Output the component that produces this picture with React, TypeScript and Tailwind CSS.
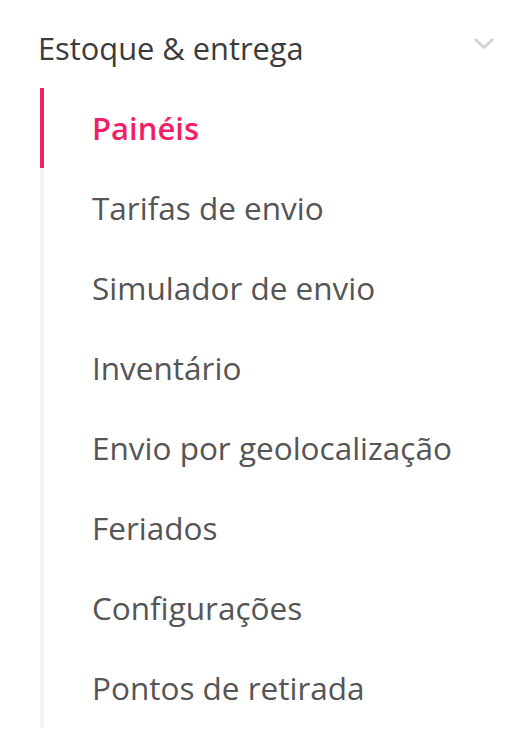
const items = [
  "Painéis",
  "Tarifas de envio",
  "Simulador de envio",
  "Inventário",
  "Envio por geolocalização",
  "Feriados",
  "Configurações",
  "Pontos de retirada",
];

export default function App() {
  return (
    <div className="min-h-[744px] bg-white pt-[28px] font-['Open_Sans',sans-serif]">
      <div className="flex items-center justify-between pl-[38px] pr-[20px]">
        <span className="text-[30.8px] leading-[40px] text-[#3b3b3b]">Estoque &amp; entrega</span>
        <svg width="20" height="11" viewBox="0 0 20 11" className="mb-[10px]" fill="none">
          <polyline points="1.5,1.5 10,9.5 18.5,1.5" stroke="#d2d2d2" strokeWidth="2.5" strokeLinecap="round" strokeLinejoin="round" />
        </svg>
      </div>
      <ul className="ml-[40px] mt-[20px] border-l-4 border-[#f1f2f4]">
        {items.map((item, i) => (
          <li
            key={item}
            className={
              i === 0
                ? "-ml-[4px] flex h-[80px] items-center border-l-4 border-[#f21f68] pl-[48px] text-[31px] leading-[40px] font-semibold text-[#f21f68]"
                : "flex h-[80px] items-center pl-[48px] text-[31.5px] leading-[40px] text-[#555555]"
            }
          >
            {item}
          </li>
        ))}
      </ul>
    </div>
  );
}
